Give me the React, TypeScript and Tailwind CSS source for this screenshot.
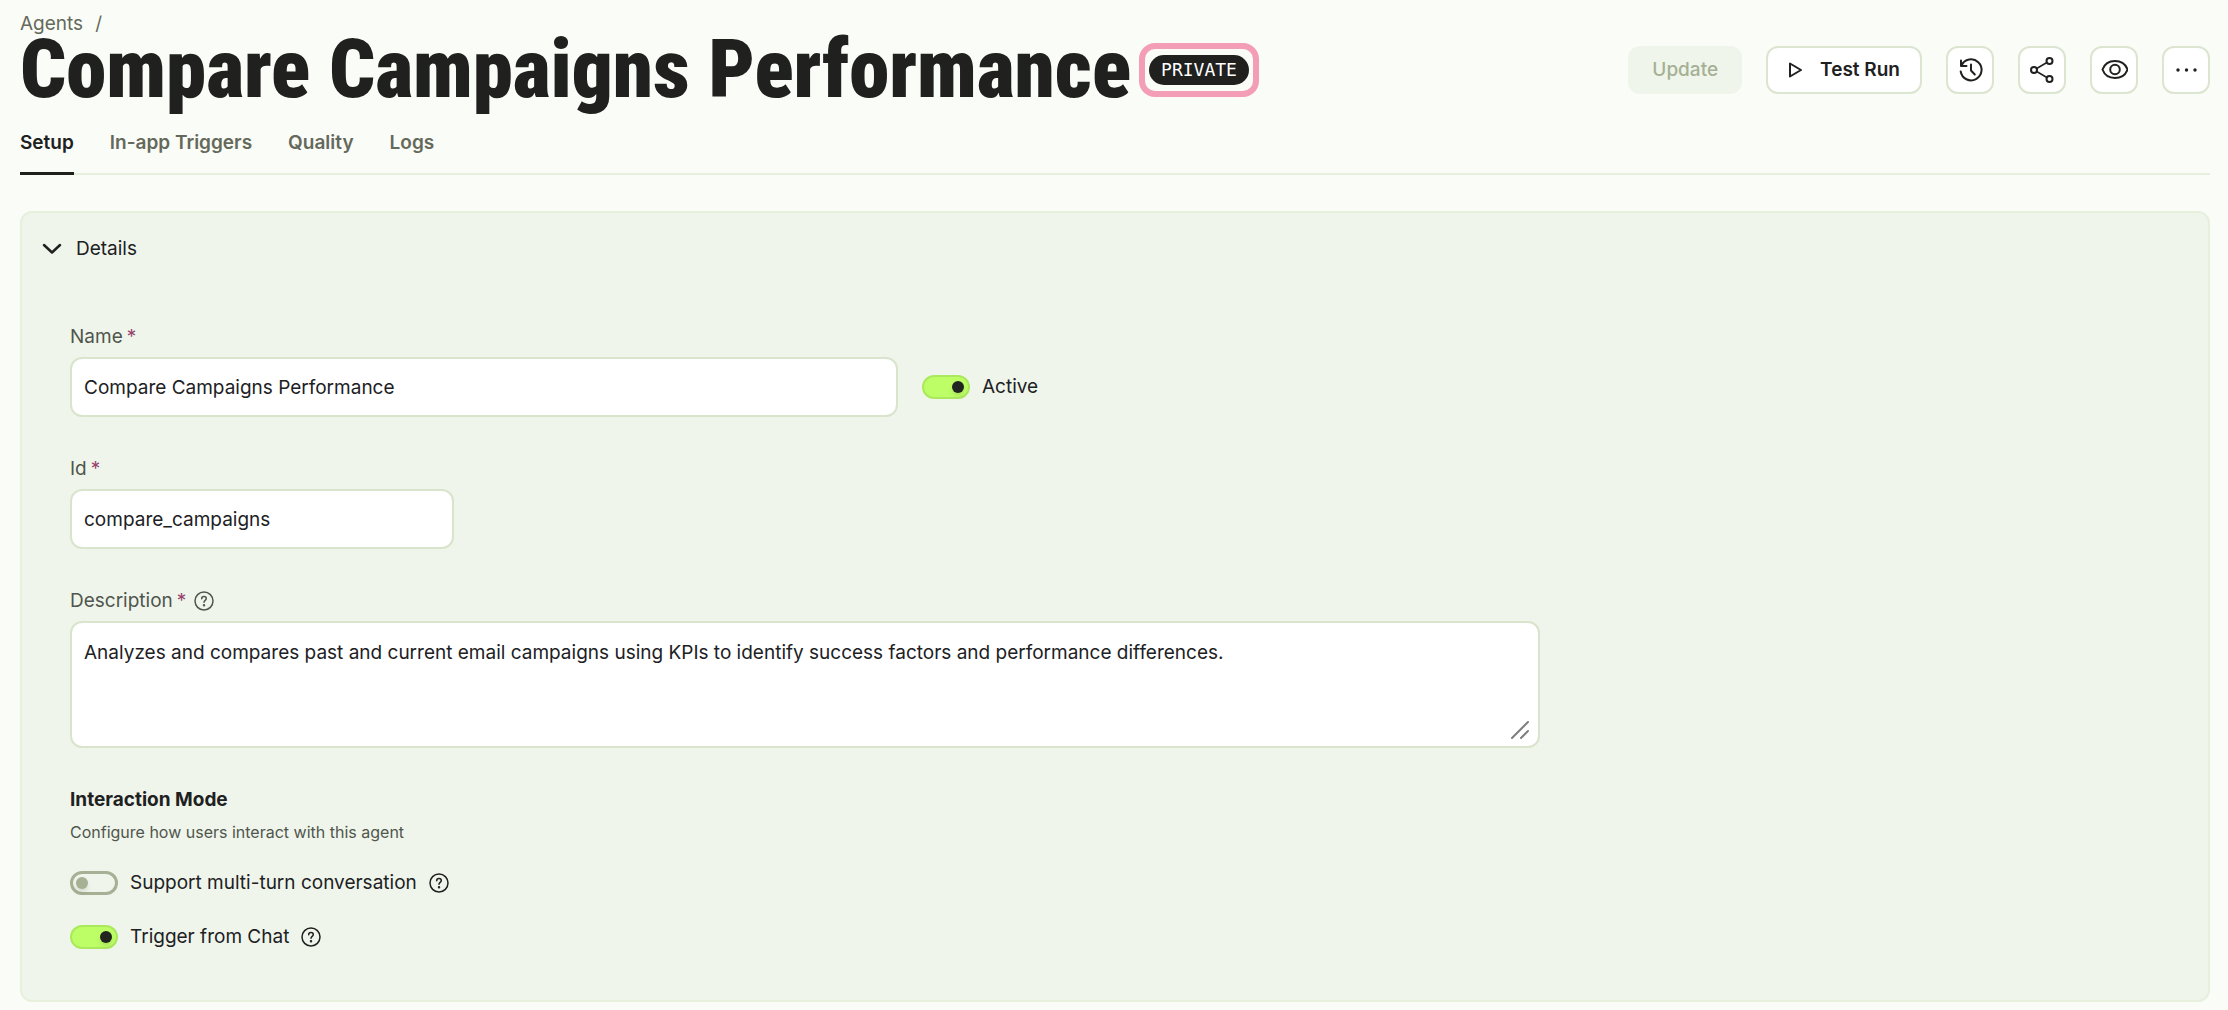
import React, { useState } from 'react';

const OUTLINE = 'border-2 border-[#dbe5cf] bg-white';
const FIELD = 'w-full rounded-xl border-2 border-[#d9e4cc] bg-white px-3 text-[19px] text-[#20211f] outline-none';
const LABEL = 'mb-2 flex items-center text-[19px] leading-6 text-[#50554d]';
const TABS = ['Setup', 'In-app Triggers', 'Quality', 'Logs'];

const HelpIcon: React.FC = () => (
  <svg className="size-5" viewBox="0 0 20 20" fill="none" stroke="currentColor" strokeWidth="1.5" strokeLinecap="round" strokeLinejoin="round">
    <circle cx="10" cy="10" r="9" />
    <path d="M7.7 7.7c0-1.2 1-2.1 2.3-2.1s2.3.8 2.3 2c0 1.7-2.3 1.8-2.3 3.6" />
    <circle cx="10" cy="14.2" r="0.5" fill="currentColor" />
  </svg>
);

const Required: React.FC = () => <span className="ml-1 text-[#95436b]">*</span>;

interface ToggleProps {
  label: string;
  checked: boolean;
  onChange: (value: boolean) => void;
  help?: boolean;
}

const Toggle: React.FC<ToggleProps> = ({ label, checked, onChange, help }) => (
  <div className="flex items-center gap-3 text-[19px] leading-6 whitespace-nowrap text-[#20211f]">
    <label className="relative flex items-center gap-3">
      <input type="checkbox" role="switch" className="sr-only" checked={checked} onChange={(e) => onChange(e.target.checked)} />
      <span
        className={`flex h-6 w-12 items-center rounded-full ${
          checked ? 'justify-end border-2 border-[#abe95c] bg-[#bdfe66] px-1' : 'justify-start border-3 border-[#a5b094] px-[3px]'
        }`}
      >
        <span className={`size-3 rounded-full shadow-md ${checked ? 'bg-[#222420]' : 'bg-[#a5b094]'}`} />
      </span>
      {label}
    </label>
    {help && (
      <button type="button" aria-label={`About ${label}`}>
        <HelpIcon />
      </button>
    )}
  </div>
);

interface IconButtonProps {
  label: string;
  children: React.ReactNode;
}

const IconButton: React.FC<IconButtonProps> = ({ label, children }) => (
  <button type="button" aria-label={label} className={`flex size-12 items-center justify-center rounded-xl ${OUTLINE}`}>
    <svg className="size-7" viewBox="0 0 28 28" fill="none" stroke="currentColor" strokeWidth="2" strokeLinecap="round" strokeLinejoin="round">
      {children}
    </svg>
  </button>
);

export default function App() {
  const [tab, setTab] = useState('Setup');
  const [open, setOpen] = useState(true);
  const [name, setName] = useState('Compare Campaigns Performance');
  const [agentId, setAgentId] = useState('compare_campaigns');
  const [description, setDescription] = useState(
    'Analyzes and compares past and current email campaigns using KPIs to identify success factors and performance differences.'
  );
  const [active, setActive] = useState(true);
  const [multiTurn, setMultiTurn] = useState(false);
  const [fromChat, setFromChat] = useState(true);

  return (
    <div className="min-h-screen bg-[#fafcf7] pt-3 pr-[18px] pb-2 pl-5 font-[Inter,'Liberation_Sans',sans-serif] text-[#20211f]">
      <nav className="flex gap-3 text-[19px] leading-6 text-[#65695b]">
        <a href="#agents">Agents</a>
        <span>/</span>
      </nav>

      <header className="flex items-center justify-between">
        <div className="flex items-center gap-2">
          <h1 className="font-['Roboto_Condensed',Roboto,sans-serif] text-[81px] leading-[68px] font-black whitespace-nowrap">
            Compare Campaigns Performance
          </h1>
          <div className="rounded-2xl border-6 border-[#f39db7] px-1 py-1.5">
            <span className="flex h-[30px] items-center rounded-full bg-[#20211f] px-3 font-['DejaVu_Sans_Mono',monospace] text-lg text-white">PRIVATE</span>
          </div>
        </div>

        <div className="flex gap-6">
          <button type="button" disabled className="h-12 rounded-xl bg-[#eff5eb] px-6 text-[19px] font-medium text-[#a5b094]">
            Update
          </button>
          <button type="button" className={`flex h-12 items-center gap-4 rounded-xl px-5 text-[19px] font-semibold ${OUTLINE}`}>
            <svg className="size-4" viewBox="0 0 16 16" fill="none" stroke="currentColor" strokeWidth="2" strokeLinejoin="round">
              <path d="M2 1.5v13L13 8z" />
            </svg>
            Test Run
          </button>
          <IconButton label="History">
            <path d="M5 4.5V10h5.5M5.500 9.500A10.500 10.500 0 1 1 4.700 15.500" />
            <path d="M15 8.500v6l3.800 4" />
          </IconButton>
          <IconButton label="Share">
            <circle cx="6" cy="14" r="3" />
            <circle cx="21.5" cy="5" r="3" />
            <circle cx="21.5" cy="23" r="3" />
            <path d="M8.7 12.5l10.2-6M8.7 15.5l10.2 6" strokeWidth="1.5" />
          </IconButton>
          <IconButton label="Preview">
            <path d="M2.5 13.5C4.5 8 9.5 5 15 5s10.5 3 12.5 8.500C25.500 19 20.500 22 15 22S4.500 19 2.500 13.500z" />
            <circle cx="15" cy="13.5" r="4.8" />
          </IconButton>
          <IconButton label="More">
            <g fill="currentColor" stroke="none">
              <circle cx="6" cy="14" r="1.7" />
              <circle cx="14.5" cy="14" r="1.7" />
              <circle cx="23" cy="14" r="1.7" />
            </g>
          </IconButton>
        </div>
      </header>

      <div role="tablist" className="flex gap-9 border-b-2 border-[#e6f0dc] pt-[27px]">
        {TABS.map((item) => (
          <button
            key={item}
            type="button"
            role="tab"
            aria-selected={tab === item}
            onClick={() => setTab(item)}
            className={`-mb-[2px] border-b-3 pb-[17px] text-[19px] leading-6 font-semibold ${
              tab === item ? 'border-[#20211f] text-[#20211f]' : 'border-transparent text-[#65695b]'
            }`}
          >
            {item}
          </button>
        ))}
      </div>

      <section className="mt-9 rounded-xl border-2 border-[#e6f0dc] bg-[#eff5eb]">
        <button type="button" aria-expanded={open} onClick={() => setOpen(!open)} className="flex items-center gap-3.5 px-5 pt-6 text-[19px] leading-6">
          <svg className="size-5" viewBox="0 0 20 20" fill="none" stroke="currentColor" strokeWidth="2.5" strokeLinecap="round" strokeLinejoin="round">
            <path d="M2 6l8 7.500 8-7.500" />
          </svg>
          Details
        </button>

        {open && (
          <div className="flex flex-col gap-10 px-12 pt-16 pb-[51px]">
            <div>
              <label htmlFor="agent-name" className={LABEL}>
                Name
                <Required />
              </label>
              <div className="flex items-center gap-6">
                <div className="w-full max-w-[828px]">
                  <input id="agent-name" className={`block h-15 ${FIELD}`} value={name} onChange={(e) => setName(e.target.value)} />
                </div>
                <Toggle label="Active" checked={active} onChange={setActive} />
              </div>
            </div>

            <div className="max-w-[384px]">
              <label htmlFor="agent-id" className={LABEL}>
                Id
                <Required />
              </label>
              <input id="agent-id" className={`block h-15 ${FIELD}`} value={agentId} onChange={(e) => setAgentId(e.target.value)} />
            </div>

            <div className="max-w-[1470px]">
              <label htmlFor="agent-description" className={LABEL}>
                Description
                <Required />
                <span className="ml-2">
                  <HelpIcon />
                </span>
              </label>
              <div className="relative">
                <textarea
                  id="agent-description"
                  className={`block h-[127px] resize-none py-4 leading-7 ${FIELD}`}
                  value={description}
                  onChange={(e) => setDescription(e.target.value)}
                />
                <svg className="absolute right-2.5 bottom-2 size-5" viewBox="0 0 20 20" fill="none" stroke="#7f7f7f" strokeWidth="2" strokeLinecap="round">
                  <path d="M2 18L18 2M11 18l7-7" />
                </svg>
              </div>
            </div>

            <div>
              <h2 className="text-[19px] leading-6 font-bold">Interaction Mode</h2>
              <p className="mt-2 text-base leading-6 text-[#50554d]">Configure how users interact with this agent</p>
              <div className="mt-[27px] flex flex-col gap-[30px]">
                <Toggle label="Support multi-turn conversation" checked={multiTurn} onChange={setMultiTurn} help />
                <Toggle label="Trigger from Chat" checked={fromChat} onChange={setFromChat} help />
              </div>
            </div>
          </div>
        )}
      </section>
    </div>
  );
}
